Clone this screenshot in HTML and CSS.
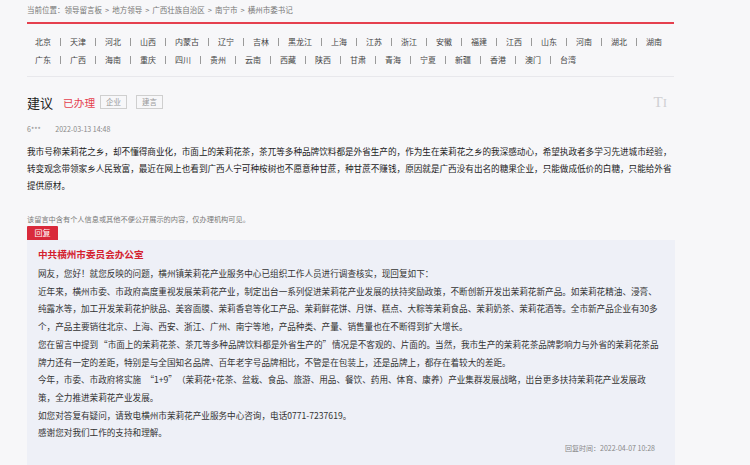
FILE: index.html
```html
<!DOCTYPE html>
<html lang="zh-CN">
<head>
    <meta charset="UTF-8">
    <meta name="viewport" content="width=device-width, initial-scale=1.0">
    <title>领导留言板 - 横州市委书记</title>
    <link rel="stylesheet" href="styles.css">
</head>
<body>
    <div class="page">
        <div class="crumbs">
            当前位置：<a href="#">领导留言板</a><span class="gt">&gt;</span><a href="#">地方领导</a><span class="gt">&gt;</span><a href="#">广西壮族自治区</a><span class="gt">&gt;</span><a href="#">南宁市</a><span class="gt">&gt;</span><a href="#">横州市委书记</a>
        </div>

        <div class="areas">
            <div class="area-row">
                <a href="#">北京</a><i></i><a href="#">天津</a><i></i><a href="#">河北</a><i></i><a href="#">山西</a><i></i><a href="#">内蒙古</a><i></i><a href="#">辽宁</a><i></i><a href="#">吉林</a><i></i><a href="#">黑龙江</a><i></i><a href="#">上海</a><i></i><a href="#">江苏</a><i></i><a href="#">浙江</a><i></i><a href="#">安徽</a><i></i><a href="#">福建</a><i></i><a href="#">江西</a><i></i><a href="#">山东</a><i></i><a href="#">河南</a><i></i><a href="#">湖北</a><i></i><a href="#">湖南</a>
            </div>
            <div class="area-row">
                <a href="#">广东</a><i></i><a href="#">广西</a><i></i><a href="#">海南</a><i></i><a href="#">重庆</a><i></i><a href="#">四川</a><i></i><a href="#">贵州</a><i></i><a href="#">云南</a><i></i><a href="#">西藏</a><i></i><a href="#">陕西</a><i></i><a href="#">甘肃</a><i></i><a href="#">青海</a><i></i><a href="#">宁夏</a><i></i><a href="#">新疆</a><i></i><a href="#">香港</a><i></i><a href="#">澳门</a><i></i><a href="#">台湾</a>
            </div>
        </div>

        <div class="head">
            <h1>建议</h1>
            <span class="state">已办理</span>
            <span class="tag">企业</span>
            <span class="tag">建言</span>
            <span class="font-tool">T<b>I</b></span>
        </div>

        <div class="meta">
            <span class="user">6***</span>
            <span>2022-03-13 14:48</span>
        </div>

        <div class="content">我市号称茉莉花之乡，却不懂得商业化，市面上的茉莉花茶，茶兀等多种品牌饮料都是外省生产的，作为生在茉莉花之乡的我深感动心，希望执政者多学习先进城市经验，转变观念带领家乡人民致富，最近在网上也看到广西人宁可种桉树也不愿意种甘蔗，种甘蔗不赚钱，原因就是广西没有出名的糖果企业，只能做成低价的白糖，只能给外省提供原材。</div>

        <div class="notice">该留言中含有个人信息或其他不便公开展示的内容，仅办理机构可见。</div>

        <span class="reply-btn">回复</span>
        <div class="reply">
            <h2>中共横州市委员会办公室</h2>
            <p>网友，您好！就您反映的问题，横州镇茉莉花产业服务中心已组织工作人员进行调查核实，现回复如下：</p>
            <p>近年来，横州市委、市政府高度重视发展茉莉花产业，制定出台一系列促进茉莉花产业发展的扶持奖励政策，不断创新开发出茉莉花新产品。如茉莉花精油、浸膏、纯露水等，加工开发茉莉花护肤品、美容面膜、茉莉香皂等化工产品、茉莉鲜花饼、月饼、糕点、大粽等茉莉食品、茉莉奶茶、茉莉花酒等。全市新产品企业有30多个，产品主要销往北京、上海、西安、浙江、广州、南宁等地，产品种类、产量、销售量也在不断得到扩大增长。</p>
            <p>您在留言中提到<q>市面上的茉莉花茶、茶兀等多种品牌饮料都是外省生产的</q>情况是不客观的、片面的。当然，我市生产的茉莉花茶品牌影响力与外省的茉莉花茶品牌力还有一定的差距，特别是与全国知名品牌、百年老字号品牌相比，不管是在包装上，还是品牌上，都存在着较大的差距。</p>
            <p>今年，市委、市政府将实施<q class="wide">1+9</q>（茉莉花+花茶、盆栽、食品、旅游、用品、餐饮、药用、体育、康养）产业集群发展战略，出台更多扶持茉莉花产业发展政策，全力推进茉莉花产业发展。</p>
            <p>如您对答复有疑问，请致电横州市茉莉花产业服务中心咨询，电话0771-7237619。</p>
            <p>感谢您对我们工作的支持和理解。</p>
            <div class="reply-time">回复时间：2022-04-07 10:28</div>
        </div>
    </div>
</body>
</html>
```

FILE: styles.css
```css
body {
    margin: 0;
    background-color: #f7f7f9;
    font-family: "Noto Sans CJK SC", "Microsoft YaHei", sans-serif;
    color: #222;
}

a {
    color: inherit;
    text-decoration: none;
}

.page {
    width: 648px;
    margin-left: 27px;
}

.crumbs {
    font-size: 7.5px;
    line-height: 20px;
    color: #777;
    padding-bottom: 2px;
    border-bottom: 2px solid #e5404e;
    width: 647px;
}

.crumbs .gt {
    margin: 0 3px;
}

.areas {
    padding: 9px 0 7px 8px;
    border-bottom: 1px solid #e8e8ec;
    width: 639px;
}

.area-row {
    font-size: 8px;
    line-height: 18px;
    color: #444;
    white-space: nowrap;
}

.area-row i {
    display: inline-block;
    width: 1px;
    height: 8px;
    margin: 0 9px;
    background-color: #9a9a9a;
    vertical-align: -1px;
}

.head {
    display: flex;
    align-items: center;
    height: 20px;
    margin-top: 15px;
}

.head h1 {
    margin: 0;
    font-size: 13px;
    font-weight: normal;
    color: #222;
}

.state {
    margin-left: 10px;
    font-size: 10.7px;
    color: #e5404e;
}

.tag {
    margin-left: 5px;
    padding: 0 5px;
    height: 12px;
    line-height: 12px;
    border: 1px solid #cfcfcf;
    font-size: 7.5px;
    color: #999;
}

.tag + .tag {
    margin-left: 9px;
}

.font-tool {
    margin-left: auto;
    margin-right: 8px;
    font-family: "Liberation Serif", serif;
    font-size: 15px;
    color: #cfcfd3;
}

.font-tool b {
    font-weight: normal;
    font-size: 13px;
}

.meta {
    margin-top: 10px;
    font-size: 7px;
    line-height: 14px;
    color: #888;
}

.meta .user {
    margin-right: 13px;
}

.content {
    margin-top: 7px;
    width: 647px;
    font-size: 8.6px;
    line-height: 17px;
    color: #222;
}

.notice {
    margin-top: 19px;
    font-size: 7.2px;
    line-height: 12px;
    color: #777;
}

.reply-btn {
    display: block;
    width: 31px;
    height: 14px;
    margin-top: 1px;
    background-color: #d92a3b;
    border-radius: 1px 1px 0 0;
    color: #fff;
    font-size: 8px;
    line-height: 14px;
    text-align: center;
}

.reply {
    background-color: #eef0f7;
    padding: 5px 14px 30px 11px;
}

.reply h2 {
    margin: 0;
    font-size: 9.6px;
    line-height: 18px;
    color: #d4202e;
}

.reply p {
    margin: 0;
    font-size: 8.6px;
    line-height: 17.7px;
    color: #333;
}

.reply q::before {
    content: "“";
    padding-left: 0.1em;
}

.reply q::after {
    content: "”";
    padding-right: 0.1em;
}

.reply q.wide::before {
    padding-left: 0.5em;
}

.reply q.wide::after {
    padding-right: 0.5em;
}

.reply h2 + p {
    margin-top: 2px;
}

.reply-time {
    text-align: right;
    margin-right: 6px;
    font-size: 7px;
    line-height: 12px;
    color: #888;
}
```
